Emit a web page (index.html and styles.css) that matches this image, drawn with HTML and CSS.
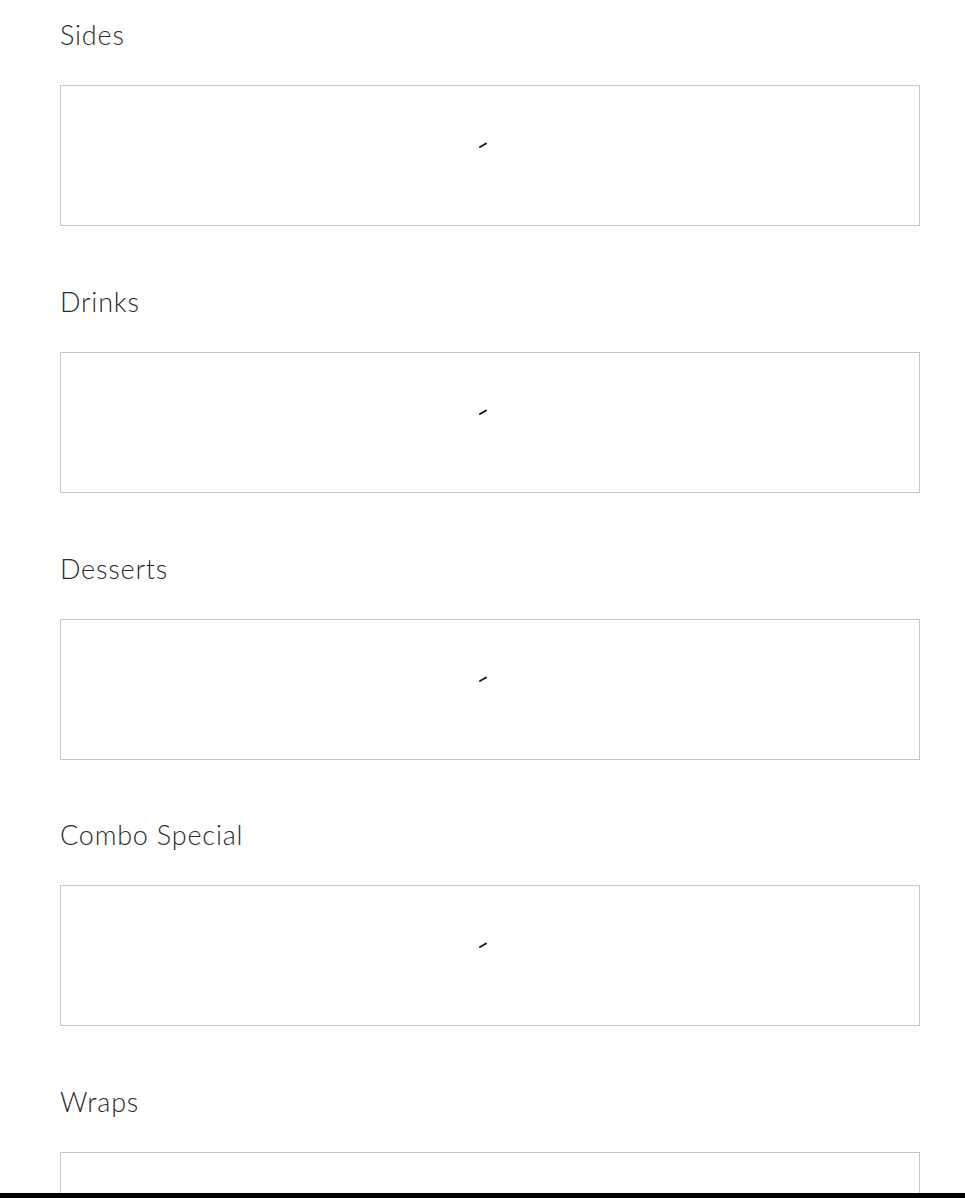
FILE: index.html
```html
<!DOCTYPE html>
<html lang="en">
<head>
<meta charset="utf-8">
<title>Menu</title>
<link rel="stylesheet" href="styles.css">
</head>
<body>
<main class="menu">
  <section class="category">
    <h2 class="category-title">Sides</h2>
    <div class="category-box"><svg class="spinner" width="12" height="8" viewBox="0 0 12 8"><path d="M2 6 L8 2.5" /></svg></div>
  </section>
  <section class="category">
    <h2 class="category-title">Drinks</h2>
    <div class="category-box"><svg class="spinner" width="12" height="8" viewBox="0 0 12 8"><path d="M2 6 L8 2.5" /></svg></div>
  </section>
  <section class="category">
    <h2 class="category-title">Desserts</h2>
    <div class="category-box"><svg class="spinner" width="12" height="8" viewBox="0 0 12 8"><path d="M2 6 L8 2.5" /></svg></div>
  </section>
  <section class="category">
    <h2 class="category-title">Combo Special</h2>
    <div class="category-box"><svg class="spinner" width="12" height="8" viewBox="0 0 12 8"><path d="M2 6 L8 2.5" /></svg></div>
  </section>
  <section class="category">
    <h2 class="category-title">Wraps</h2>
    <div class="category-box"><svg class="spinner" width="12" height="8" viewBox="0 0 12 8"><path d="M2 6 L8 2.5" /></svg></div>
  </section>
</main>
<div class="bottom-bar"></div>
</body>
</html>
```
FILE: styles.css
```css
html, body {
  margin: 0;
  padding: 0;
  background: #ffffff;
  overflow: hidden;
}
body {
  font-family: "Lato", "Open Sans", sans-serif;
  color: #2b2b2b;
}
.menu {
  display: flex;
  flex-direction: column;
  gap: 57.75px;
  padding: 17px 45px 0 60px;
  height: 1198px;
  box-sizing: border-box;
  overflow: hidden;
}
.category {
  display: flex;
  flex-direction: column;
  gap: 32px;
  flex-shrink: 0;
}
.category-title {
  margin: 0;
  font-size: 27px;
  font-weight: 300;
  line-height: 36px;
  height: 36px;
  letter-spacing: 0.8px;
  color: #2b2b2b;
}
.category-box {
  box-sizing: border-box;
  height: 141px;
  border: 1px solid #c6c6c6;
  display: flex;
  justify-content: center;
  padding-top: 55px;
  padding-right: 12px;
}
.spinner {
  display: block;
}
.spinner path {
  stroke: #1a1a1a;
  stroke-width: 2;
  stroke-linecap: round;
  fill: none;
}
.bottom-bar {
  position: fixed;
  left: 0;
  right: 0;
  bottom: 0;
  height: 5px;
  background: #000;
}
```
